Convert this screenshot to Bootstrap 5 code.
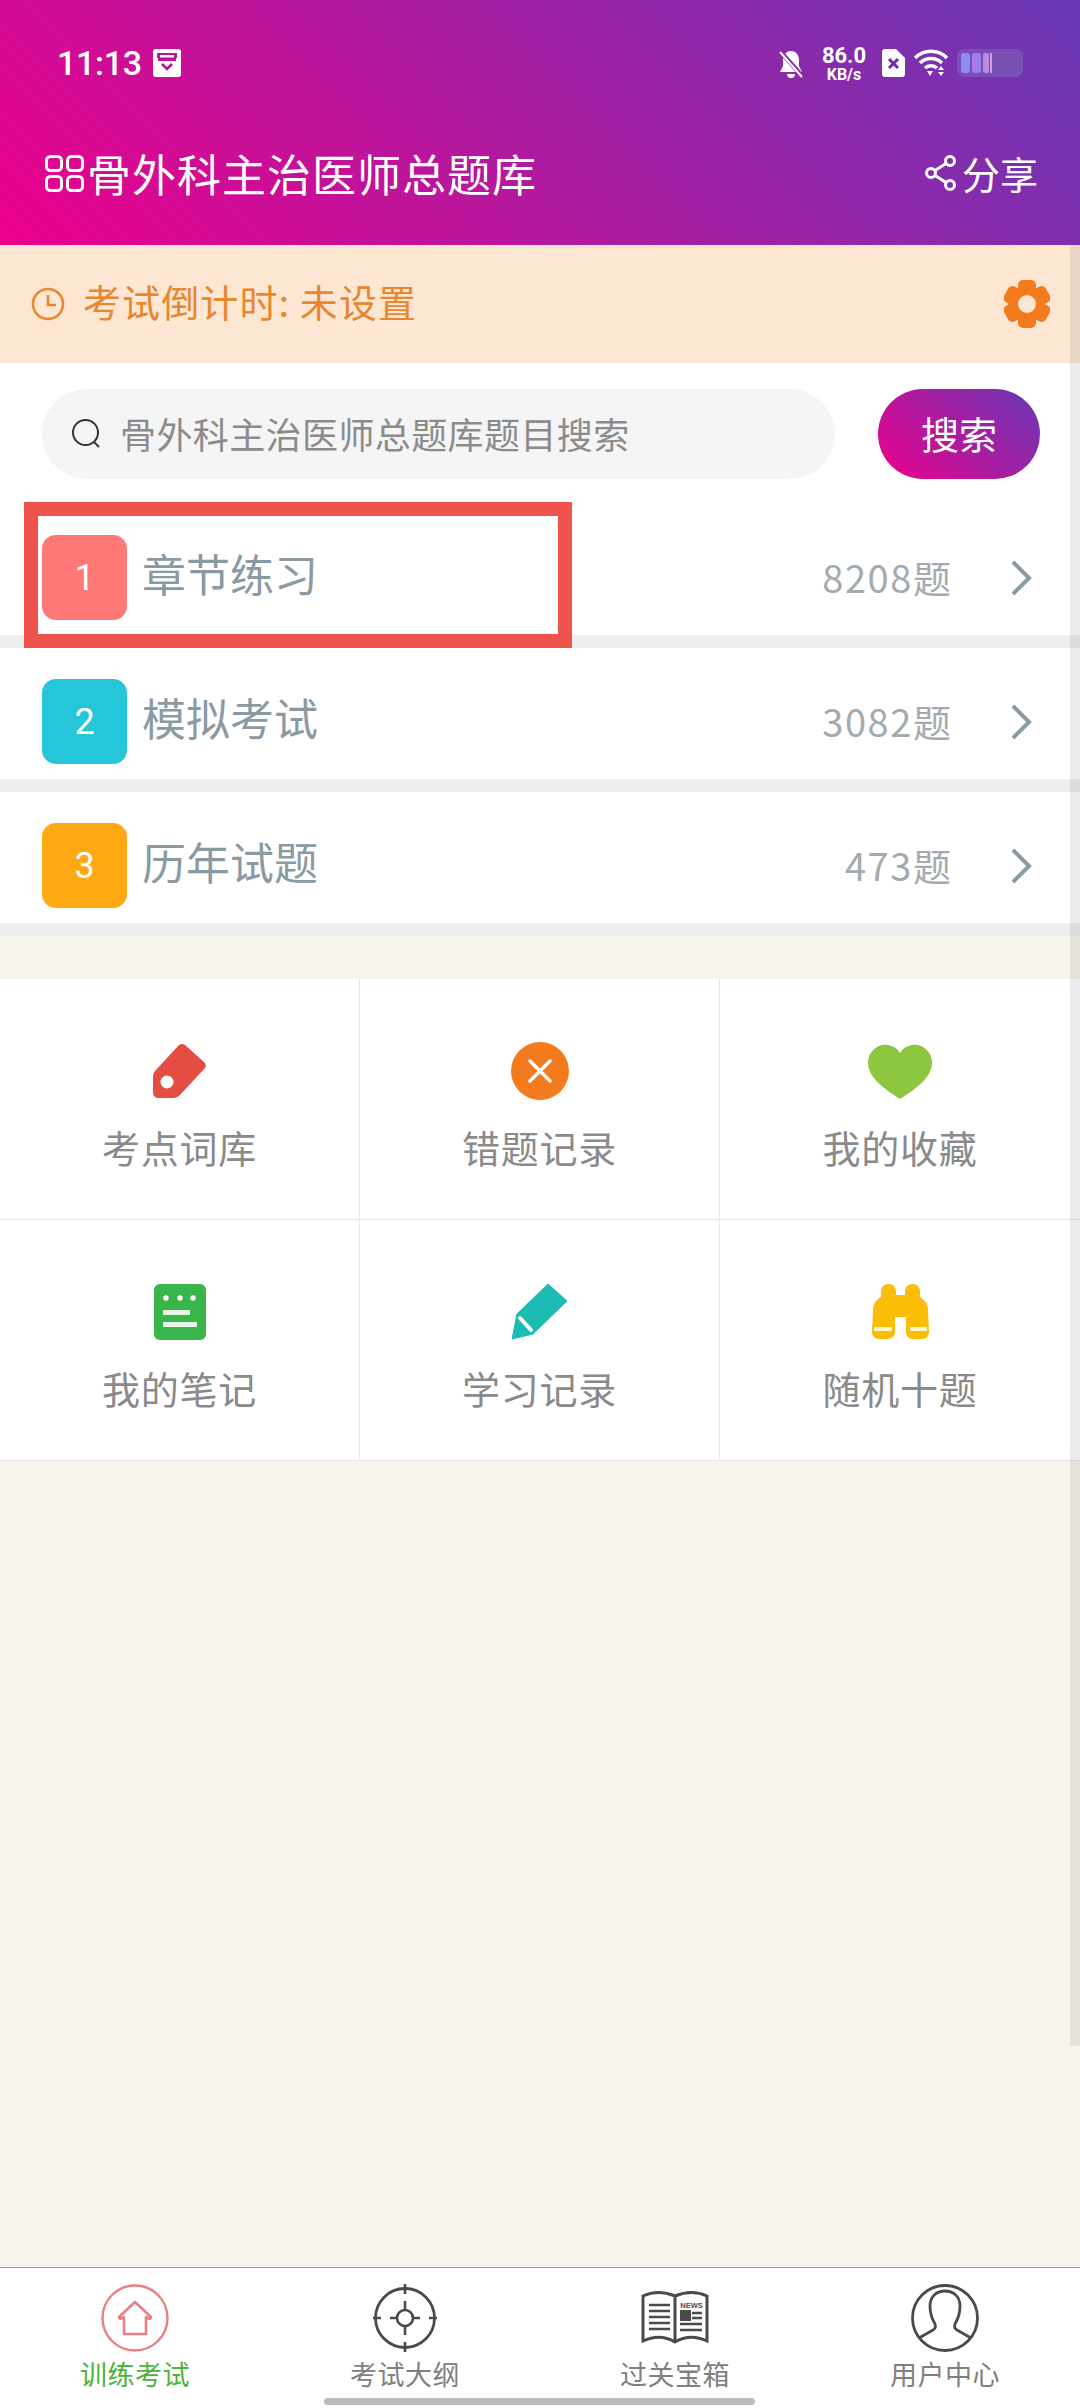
<!DOCTYPE html><html lang="zh-CN">
<head>
  <meta charset="UTF-8" />
  <meta name="viewport" content="width=device-width, initial-scale=1.0"/>
  <title>骨外科主治医师总题库</title>
  <link href="https://cdn.jsdelivr.net/npm/bootstrap@5.3.0/dist/css/bootstrap.min.css" rel="stylesheet">
  <style>
    html, body { margin: 0; background: #f7f4ed; }
    body { font-family: "Noto Sans CJK SC", "Noto Sans", sans-serif; }
    .phone { position: relative; width: 1080px; height: 2408px; overflow: hidden; background: #f7f4ed; }
    .grad { background-image: linear-gradient(45deg, #ec008c, #6739b6); }
    .app-head { height: 245px; color: #fff; }
    .status-line { height: 126px; padding: 49px 57px 0 57px; }
    .clock-text { font-family: Roboto, sans-serif; font-weight: 500; font-size: 34px; line-height: 28px; letter-spacing: -.3px; width: 96px; }
    .speed { width: 58px; margin: -3px 9px 0 10px; font-family: Roboto, sans-serif; font-weight: 700; text-align: center; color: #fff; }
    .speed div:first-child { font-size: 22px; line-height: 20px; }
    .speed div:last-child { font-size: 16px; line-height: 17px; }
    .title-line { height: 98px; padding: 0 42px 4px 45px; }
    .title-text { font-size: 44px; line-height: 60px; margin-left: 3px; letter-spacing: 1px; }
    .share-text { font-size: 38px; line-height: 60px; margin-left: 5px; }
    .count-banner { height: 118px; background: #fde6d2; color: #e8872f; padding: 0 30px 0 31px; }
    .count-text { font-size: 38px; margin-left: 18px; line-height: 50px; margin-top: -6px; letter-spacing: 1.1px; }
    .search-area { height: 141px; background: #fff; padding: 26px 40px 0 42px; }
    .search-pill { width: 793px; height: 90px; border-radius: 45px; background: #f5f5f5; padding-left: 29px; color: #8b8b8b; font-size: 36px; }
    .search-pill span { margin-left: 17px; margin-top: -2px; letter-spacing: .4px; }
    .search-btn { width: 162px; height: 90px; border: 0; border-radius: 45px; color: #fff; font-size: 38px; padding: 0 0 4px 0; }
    .test-row { height: 144px; background: #fff; border-bottom: 13px solid #eeeeee; padding: 31px 48px 15px 42px; }
    .num-tile { width: 85px; height: 85px; border-radius: 14px; color: #fff; font-family: Roboto, sans-serif; font-size: 36px; }
    .t1 { background: #ff7878; }
    .t2 { background: #26c6da; }
    .t3 { background: #ffa912; }
    .row-name { margin-left: 15px; font-size: 44px; color: #8a9aa3; line-height: 60px; margin-top: -9px; }
    .row-count { margin-left: auto; margin-right: 59px; color: #a4abaf; font-size: 38px; line-height: 50px; letter-spacing: 1.6px; margin-top: -2px; }
    .row-count i { font-style: normal; letter-spacing: 0; }
    .tools { margin-top: 43px; background: #fff; width: 1080px; }
    .tool-cell { height: 241px; border-bottom: 1px solid #e4e4e4; border-right: 1px solid #e9e9e9; padding-top: 63px; }
    .tool-cell.lastc { border-right: 0; }
    .tool-ico { height: 58px; }
    .tool-label { margin-top: 22px; font-size: 38px; line-height: 50px; letter-spacing: .7px; color: #8a8a8a; }
    .tab-bar { margin-top: auto; height: 141px; background: #fff; border-top: 1px solid #999; }
    .tab-item { width: 270px; padding-top: 15px; }
    .tab-ico { height: 70px; }
    .tab-label { margin-top: 3px; font-size: 27px; line-height: 36px; letter-spacing: .5px; color: #808080; }
    .tab-label.on { color: #4db339; }
    /* overlays */
    .mark-box { position: absolute; left: 24px; top: 502px; width: 548px; height: 146px; border: 14px solid #f0524c; }
    .scroll-strip { position: absolute; left: 1070px; top: 245px; width: 10px; height: 1801px; background: rgba(120,120,120,.14); }
    .home-pill { position: absolute; left: 324px; top: 2398px; width: 431px; height: 7px; border-radius: 4px; background: #bdbdbd; }
    svg { display: block; }
  </style>
</head>
<body>
<div class="phone d-flex flex-column">

  <div class="app-head grad">
    <div class="status-line d-flex align-items-start">
      <div class="clock-text">11:13</div>
      <svg width="28" height="28" viewBox="0 0 28 28"><rect width="28" height="28" rx="3" fill="#fff"/><path d="M4 9V4h20v5z M5 9h18v3H5z" fill="#c0129a"/><rect x="7" y="6" width="14" height="2.500" fill="#fff"/><path d="M9 15l5 5 5-5" fill="none" stroke="#b8128f" stroke-width="2.600"/></svg>
      <div class="ms-auto d-flex align-items-start">
        <svg width="28" height="30" viewBox="0 0 28 30"><path d="M14 2c5 0 8 4 8 9v6l3 6H3l3-6v-6c0-5 3-9 8-9z M10 25h8a4 4 0 0 1-8 0z" fill="#fff"/><path d="M2 1l24 27" stroke="#8a2aa8" stroke-width="4.500"/><path d="M3 3l22 25" stroke="#fff" stroke-width="2"/></svg>
        <div class="speed"><div>86.0</div><div>KB/s</div></div>
        <svg width="23" height="28" viewBox="0 0 23 28"><path d="M3 0h11l9 9v16a3 3 0 0 1-3 3H3a3 3 0 0 1-3-3V3a3 3 0 0 1 3-3z" fill="#fff"/><path d="M7 10l9 9M16 10l-9 9" stroke="#6a2ca8" stroke-width="3"/></svg>
        <svg width="36" height="28" viewBox="0 0 36 28" class="ms-2"><path d="M2 9c9-9 23-9 32 0M7 14c6-6 16-6 22 0M12 19c3-3 9-3 12 0" fill="none" stroke="#fff" stroke-width="3.400"/><path d="M14 22h6l-3 5z M25 21l3-4 3 4z M25 23h6l-3 4z" fill="#fff"/></svg>
        <svg width="66" height="28" viewBox="0 0 66 28" class="ms-2"><rect width="66" height="28" rx="7" fill="#7b6ab4" fill-opacity=".55"/><rect x="4" y="4" width="9" height="20" rx="3" fill="#8f8cf0"/><rect x="15" y="4" width="9" height="20" rx="3" fill="#a17df0"/><rect x="26" y="4" width="6" height="20" rx="2" fill="#b98ae8"/><rect x="33" y="4" width="2" height="20" fill="#d0a0e8"/></svg>
      </div>
    </div>
    <div class="title-line d-flex align-items-center">
      <svg width="39" height="37" viewBox="0 0 39 37"><g fill="none" stroke="#fff" stroke-width="3"><rect x="1.500" y="1.500" width="15" height="14" rx="4"/><rect x="22.500" y="1.500" width="15" height="14" rx="4"/><rect x="1.500" y="21.500" width="15" height="14" rx="4"/><rect x="22.500" y="21.500" width="15" height="14" rx="4"/></g></svg>
      <div class="title-text">骨外科主治医师总题库</div>
      <div class="ms-auto d-flex align-items-center">
        <svg width="32" height="36" viewBox="0 0 32 36"><g fill="none" stroke="#fff" stroke-width="3"><circle cx="25" cy="6" r="4.500"/><circle cx="6" cy="18" r="4.500"/><circle cx="25" cy="30" r="4.500"/><path d="M21 8.500L10 15.500M10 20.500l11 7"/></g></svg>
        <div class="share-text">分享</div>
      </div>
    </div>
  </div>

  <div class="count-banner d-flex align-items-center">
    <svg width="34" height="34" viewBox="0 0 34 34"><circle cx="17" cy="17" r="15" fill="none" stroke="#e8872f" stroke-width="2.600"/><path d="M17 8v10h8" fill="none" stroke="#e8872f" stroke-width="2.600"/></svg>
    <div class="count-text">考试倒计时: 未设置</div>
    <svg class="ms-auto" width="46" height="48" viewBox="0 0 46 48"><g fill="#f37b1d"><rect x="14" y="0" width="18" height="48" rx="5"/><rect x="14" y="0" width="18" height="48" rx="5" transform="rotate(60 23 24)"/><rect x="14" y="0" width="18" height="48" rx="5" transform="rotate(120 23 24)"/><circle cx="23" cy="24" r="18"/></g><circle cx="23" cy="24" r="9" fill="#fde6d2"/></svg>
  </div>

  <div class="search-area d-flex justify-content-between align-items-start">
    <div class="search-pill d-flex align-items-center">
      <svg width="32" height="32" viewBox="0 0 32 32"><circle cx="14.500" cy="14.500" r="12.500" fill="none" stroke="#333" stroke-width="2"/><path d="M23 24l5 5" stroke="#333" stroke-width="2"/></svg>
      <span>骨外科主治医师总题库题目搜索</span>
    </div>
    <button class="btn search-btn grad">搜索</button>
  </div>

  <div class="d-flex flex-column">
    <div class="test-row d-flex align-items-center">
      <div class="num-tile t1 d-flex align-items-center justify-content-center">1</div>
      <div class="row-name">章节练习</div>
      <div class="row-count">8208<i>题</i></div>
      <svg width="22" height="36" viewBox="0 0 22 36"><path d="M3 2l16 16L3 34" fill="none" stroke="#8a9aa3" stroke-width="4"/></svg>
    </div>
    <div class="test-row d-flex align-items-center">
      <div class="num-tile t2 d-flex align-items-center justify-content-center">2</div>
      <div class="row-name">模拟考试</div>
      <div class="row-count">3082<i>题</i></div>
      <svg width="22" height="36" viewBox="0 0 22 36"><path d="M3 2l16 16L3 34" fill="none" stroke="#8a9aa3" stroke-width="4"/></svg>
    </div>
    <div class="test-row d-flex align-items-center">
      <div class="num-tile t3 d-flex align-items-center justify-content-center">3</div>
      <div class="row-name">历年试题</div>
      <div class="row-count">473<i>题</i></div>
      <svg width="22" height="36" viewBox="0 0 22 36"><path d="M3 2l16 16L3 34" fill="none" stroke="#8a9aa3" stroke-width="4"/></svg>
    </div>
  </div>

  <div class="tools row g-0">
    <div class="col-4 tool-cell d-flex flex-column align-items-center">
      <svg class="tool-ico" width="56" height="58" viewBox="0 0 56 58"><path d="M27 3q3-2 6 0L52 20q3 3 1 6L28 53q-3 3-6 3H7q-6 0-6-6V34q0-3 2-5z" fill="#e54d42"/><circle cx="15" cy="40" r="6.500" fill="#fff"/></svg>
      <div class="tool-label">考点词库</div>
    </div>
    <div class="col-4 tool-cell d-flex flex-column align-items-center">
      <svg class="tool-ico" width="58" height="58" viewBox="0 0 58 58"><circle cx="29" cy="29" r="29" fill="#f37b1d"/><path d="M19 19l20 20M39 19L19 39" stroke="#fff" stroke-width="3.500" stroke-linecap="round"/></svg>
      <div class="tool-label">错题记录</div>
    </div>
    <div class="col-4 tool-cell lastc d-flex flex-column align-items-center">
      <svg class="tool-ico" width="64" height="58" viewBox="0 0 64 58"><path d="M32 11C27 3 19 2 14 3 5 5 0 13 0 21c0 15 18 27 32 36 14-9 32-21 32-36 0-8-5-16-14-18-5-1-13 0-18 8z" fill="#8dc63f"/></svg>
      <div class="tool-label">我的收藏</div>
    </div>
    <div class="col-4 tool-cell d-flex flex-column align-items-center">
      <svg class="tool-ico" width="52" height="58" viewBox="0 0 52 58"><rect y="1" width="52" height="56" rx="6" fill="#39b54a"/><circle cx="12" cy="15" r="2.700" fill="#fff"/><circle cx="26" cy="15" r="2.700" fill="#fff"/><circle cx="39" cy="15" r="2.700" fill="#fff"/><rect x="9" y="27" width="27" height="5" fill="#e5f6e6"/><rect x="9" y="39" width="34" height="5" fill="#e5f6e6"/></svg>
      <div class="tool-label">我的笔记</div>
    </div>
    <div class="col-4 tool-cell d-flex flex-column align-items-center">
      <svg class="tool-ico" width="56" height="58" viewBox="0 0 56 58"><path d="M36 1l19 17-34 33L0 56l5-25z" fill="#1cbbb4" stroke="#1cbbb4" stroke-linejoin="round"/><path d="M8 35l11 12" stroke="#fff" stroke-width="4" stroke-linecap="round"/></svg>
      <div class="tool-label">学习记录</div>
    </div>
    <div class="col-4 tool-cell lastc d-flex flex-column align-items-center">
      <svg class="tool-ico" width="57" height="58" viewBox="0 0 57 58"><g transform="translate(0 1)"><path d="M9 8C9 3 12 0 16.500 0S24 3 24 8V11H33V8C33 3 36 0 40.500 0S48 3 48 8V13C53 16 56 20 56 26L57 48C57 52 54 55 50 55H41C37 55 34 52 34 48V33H23V48C23 52 20 55 16 55H7C3 55 0 52 0 48L1 26C1 20 4 16 9 13Z" fill="#fbbd08"/><rect x="2" y="43" width="18" height="4" fill="#fff5cc"/><rect x="38" y="43" width="17" height="4" fill="#fff5cc"/></g></svg>
      <div class="tool-label">随机十题</div>
    </div>
  </div>

  <div class="tab-bar d-flex">
    <div class="tab-item d-flex flex-column align-items-center">
      <svg class="tab-ico" width="70" height="70" viewBox="0 0 70 70"><circle cx="35" cy="35" r="32.500" fill="none" stroke="#e88080" stroke-width="2.400"/><path d="M35 19L19 34l1 2 4-2V51H46V34l4 2 1-2Z" fill="none" stroke="#e88080" stroke-width="2.600" stroke-linejoin="round"/></svg>
      <div class="tab-label on">训练考试</div>
    </div>
    <div class="tab-item d-flex flex-column align-items-center">
      <svg class="tab-ico" width="70" height="70" viewBox="0 0 70 70"><circle cx="35" cy="35" r="29.500" fill="none" stroke="#4a4a4a" stroke-width="2.800"/><circle cx="35" cy="35" r="8" fill="none" stroke="#4a4a4a" stroke-width="2.600"/><path d="M35 1v10M35 59v10M35 18v9M35 43v9M3 35h8M59 35h8M20 35h7M43 35h7" stroke="#4a4a4a" stroke-width="2.600"/></svg>
      <div class="tab-label">考试大纲</div>
    </div>
    <div class="tab-item d-flex flex-column align-items-center">
      <svg class="tab-ico" width="70" height="70" viewBox="0 0 70 70"><path d="M3 13Q18 6 35 13Q52 6 67 13V58Q50 50 35 59Q20 50 3 58Z M35 13V59" fill="none" stroke="#4a4a4a" stroke-width="3"/><path d="M9 22h21M9 28h21M9 34h21M9 40h21M9 46h21M40 41h22M40 47h22M52 30h10M52 35h10" stroke="#4a4a4a" stroke-width="2.600"/><rect x="40" y="27" width="11" height="11" fill="#4a4a4a"/><text x="51.500" y="25" text-anchor="middle" font-family="Liberation Sans, sans-serif" font-weight="700" font-size="7.500" fill="#4a4a4a">NEWS</text></svg>
      <div class="tab-label">过关宝箱</div>
    </div>
    <div class="tab-item d-flex flex-column align-items-center">
      <svg class="tab-ico" width="70" height="70" viewBox="0 0 70 70"><circle cx="35" cy="35" r="32.500" fill="none" stroke="#4a4a4a" stroke-width="2.800"/><path d="M9 55l14-8c2-1 3-3 2-6-3-5-5-12-5-18 0-9 6-15 15-15s15 6 15 15c0 6-2 13-5 18-1 3 0 5 2 6l14 8" fill="none" stroke="#4a4a4a" stroke-width="2.800"/></svg>
      <div class="tab-label">用户中心</div>
    </div>
  </div>

  <div class="mark-box"></div>
  <div class="scroll-strip"></div>
  <div class="home-pill"></div>
</div>
<script src="https://cdn.jsdelivr.net/npm/bootstrap@5.3.0/dist/js/bootstrap.bundle.min.js"></script>
</body>
</html>
